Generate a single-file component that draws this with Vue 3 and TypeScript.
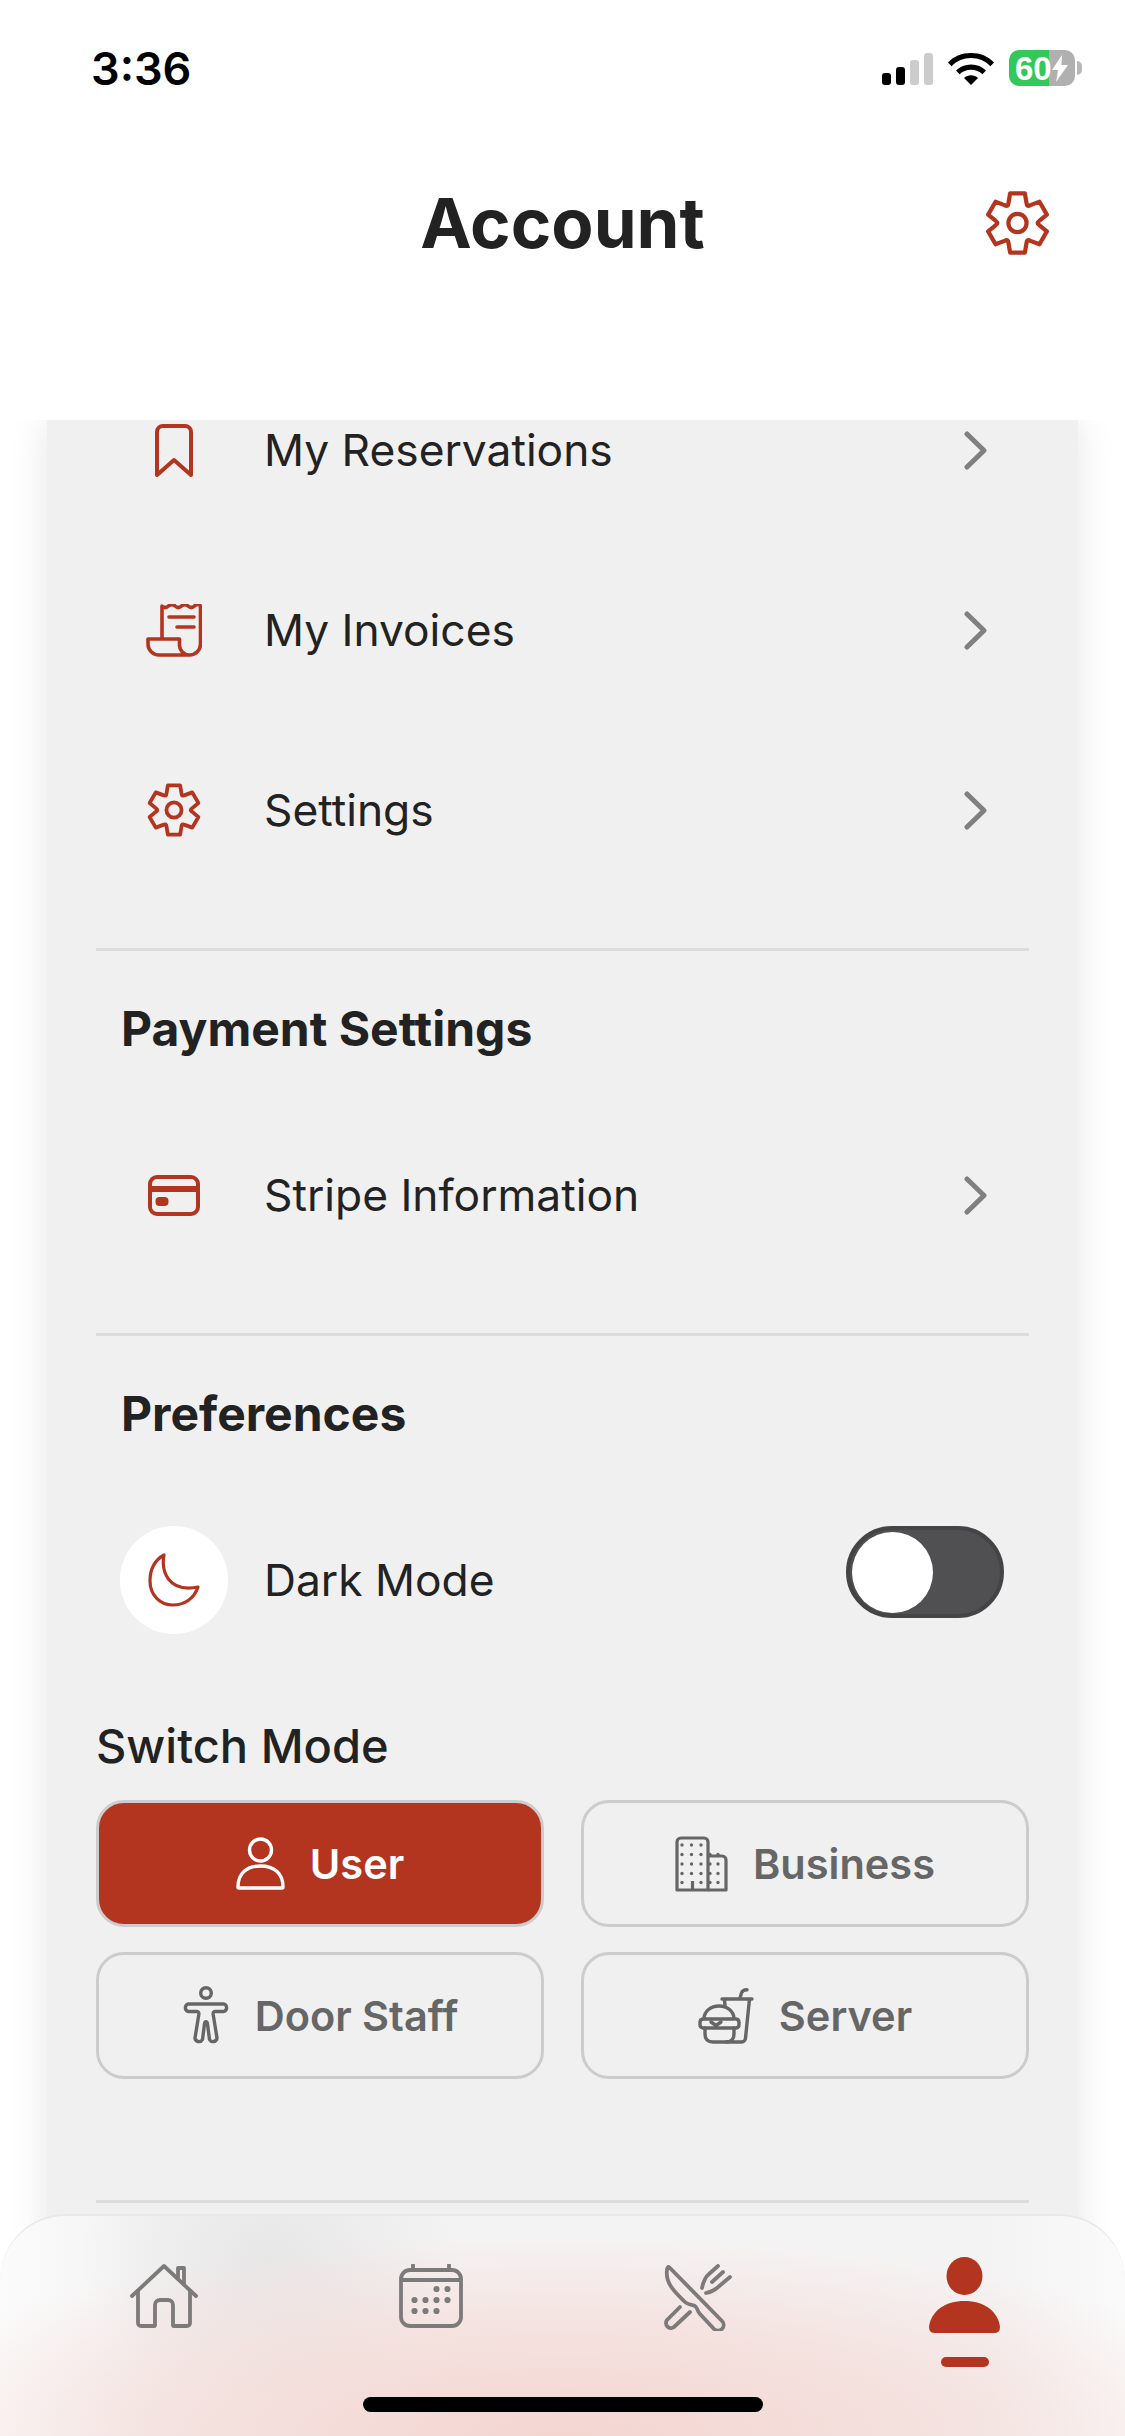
<script setup lang="ts">
interface Row { label: string; icon: string }
const topRows: Row[] = [
  { label: 'My Reservations', icon: 'bookmark' },
  { label: 'My Invoices', icon: 'invoice' },
  { label: 'Settings', icon: 'gear' },
]
function polar(r: number, deg: number): string {
  const a = (deg * Math.PI) / 180
  return `${(50 + r * Math.cos(a)).toFixed(2)} ${(50 + r * Math.sin(a)).toFixed(2)}`
}
function buildGear(): string {
  const outer = 47
  const base = 34
  const valley = 28
  let d = ''
  for (let k = 0; k < 6; k++) {
    const a = -90 + k * 60
    d += `${k === 0 ? 'M' : 'L'}${polar(base, a - 24)} L${polar(outer, a - 14)} L${polar(outer, a + 14)} L${polar(base, a + 24)} Q${polar(valley, a + 30)} ${polar(base, a + 36)} `
  }
  return d + 'Z'
}
const gearPath = buildGear()
const buildingDots: [number, number][] = []
for (const y of [9, 18.5, 28, 37.5, 46.5]) {
  for (const x of [7, 16.5, 26]) {
    if (!(x === 16.5 && y === 46.5)) buildingDots.push([x, y])
  }
  if (y > 18) { buildingDots.push([35, y], [43, y]) }
}
const calendarDots: [number, number][] = [
  [37, 25], [48, 25],
  [15, 36], [26, 36], [37, 36], [48, 36],
  [15, 47], [26, 47], [37, 47],
]
</script>

<template>
  <div class="screen">
    <header class="top">
      <div class="status">
        <span class="time">3:36</span>
        <div class="status-icons">
          <div class="signal">
            <i class="bar on b1"></i><i class="bar on b2"></i><i class="bar b3"></i><i class="bar b4"></i>
          </div>
          <svg class="wifi" width="46" height="33" viewBox="0 0 46 33">
            <path d="M0 10.5C6 4 14 1 23 1s17 3 23 9.5l-3.6 3.7C37 8.700 30.500 6 23 6S9 8.700 3.600 14.200Z" fill="#000"/>
            <path d="M8 18.500C12 14.500 17 12.500 23 12.500s11 2 15 6l-3.600 3.700C31.500 19.300 27.500 17.700 23 17.700s-8.500 1.600-11.400 4.500Z" fill="#000"/>
            <path d="M16 26C18 24.200 20.300 23.300 23 23.300s5 .9 7 2.700l-7 7Z" fill="#000"/>
          </svg>
          <div class="battery">
            <div class="cell"><span class="pct">60</span>
              <svg class="bolt" width="16" height="27" viewBox="0 0 16 27"><path d="M10 0 0 15h6L4 27 16 10H9.500Z" fill="#fff"/></svg>
            </div>
            <i class="tip"></i>
          </div>
        </div>
      </div>
      <div class="title-bar">
        <h1 class="title">Account</h1>
        <svg class="title-gear" width="65" height="66" viewBox="0 0 100 100" fill="none" stroke="#b3351f" stroke-width="6.500" stroke-linejoin="round">
          <path :d="gearPath"/><circle cx="50" cy="50" r="14"/>
        </svg>
      </div>
    </header>

    <main class="panel">
      <div class="scroller">
        <a v-for="r in topRows" :key="r.label" class="row">
          <span class="row-icon">
            <svg v-if="r.icon === 'bookmark'" width="38" height="53" viewBox="0 0 38 53" fill="none" stroke="#b3351f" stroke-width="4" stroke-linejoin="round">
              <path d="M2 51V8a6 6 0 0 1 6-6h22a6 6 0 0 1 6 6v43L19 36Z"/>
            </svg>
            <svg v-else-if="r.icon === 'invoice'" width="56" height="53" viewBox="0 0 56 53" fill="none" stroke="#b3351f" stroke-width="3.600" stroke-linecap="round" stroke-linejoin="round">
              <path d="M16 35V2q3.300 3 6.500 0t6.500 0t6.500 0t6.500 0t6.500 0t6 0V40a11 11 0 0 1-11 11a10 10 0 0 1-10-11v-5H2v5a11 11 0 0 0 11 11h31"/>
              <path d="M23 13h25M31 23h17"/>
            </svg>
            <svg v-else width="54" height="54" viewBox="0 0 100 100" fill="none" stroke="#b3351f" stroke-width="7" stroke-linejoin="round">
              <path :d="gearPath"/><circle cx="50" cy="50" r="14"/>
            </svg>
          </span>
          <span class="row-label">{{ r.label }}</span>
          <svg class="chev" width="23" height="39" viewBox="0 0 23 39" fill="none" stroke="#808080" stroke-width="5" stroke-linecap="round" stroke-linejoin="round"><path d="M3 3l17 16.500L3 36"/></svg>
        </a>

        <hr class="rule rule-a" />
        <h2 class="heading">Payment Settings</h2>
        <a class="row">
          <span class="row-icon">
            <svg width="52" height="41" viewBox="0 0 52 41" fill="none" stroke="#b3351f" stroke-width="4">
              <rect x="2" y="2" width="48" height="37" rx="7"/>
              <path d="M2 14h48" stroke-width="6"/>
              <rect x="7.500" y="22" width="13" height="9" rx="4" fill="#b3351f" stroke="none"/>
            </svg>
          </span>
          <span class="row-label">Stripe Information</span>
          <svg class="chev" width="23" height="39" viewBox="0 0 23 39" fill="none" stroke="#808080" stroke-width="5" stroke-linecap="round" stroke-linejoin="round"><path d="M3 3l17 16.500L3 36"/></svg>
        </a>

        <hr class="rule rule-b" />
        <h2 class="heading">Preferences</h2>
        <div class="dark-row">
          <span class="moon-disc">
            <svg width="52" height="54" viewBox="0 0 52 54" fill="none" stroke="#b3351f" stroke-width="3.200" stroke-linejoin="round">
              <path d="M16 2C13 18 20 40 50 34C46 46 36 52 25 52C11 52 2 41 2 28C2 16 7 7 16 2Z"/>
            </svg>
          </span>
          <span class="row-label dark-label">Dark Mode</span>
          <span class="toggle"><i class="thumb"></i></span>
        </div>

        <h3 class="switch-title">Switch Mode</h3>
        <div class="modes">
          <button class="mode">
            <svg class="mode-icon" width="49" height="53" viewBox="0 0 49 53" fill="none" stroke="#fff" stroke-width="3.400" stroke-linejoin="round">
              <circle cx="24.500" cy="13" r="11"/>
              <path d="M2 50c0-14 9-21 22.500-21S47 36 47 50a1 1 0 0 1-1 1H3a1 1 0 0 1-1-1Z"/>
            </svg>
            <span>User</span>
          </button>
          <button class="mode">
            <svg width="53" height="56" viewBox="0 0 53 56" fill="none" stroke="#666" stroke-width="3.200" stroke-linejoin="round">
              <path d="M2 54V6a4 4 0 0 1 4-4h23a4 4 0 0 1 4 4v48Z"/>
              <path d="M33 20h14a4 4 0 0 1 4 4v30H33"/>
              <path d="M17.500 54V45"/>
              <circle v-for="d in buildingDots" :key="d.join()" :cx="d[0]" :cy="d[1]" r="1.700" fill="#666" stroke="none"/>
            </svg>
            <span>Business</span>
          </button>
          <button class="mode">
            <svg width="48" height="59" viewBox="0 0 48 59" fill="none" stroke="#666" stroke-width="3.400" stroke-linejoin="round">
              <circle cx="24" cy="7" r="5.300"/>
              <path d="M6 18h36a4 4 0 0 1 0 7.500H33c-1.500 0-2 1-1.800 3L35 52a4 4 0 0 1-7.500 1.500L25.500 38c-.4-3-2.600-3-3 0L20.500 53.500A4 4 0 0 1 13 52l3.800-23.500c.2-2-.3-3-1.800-3H6A4 4 0 0 1 6 18Z"/>
            </svg>
            <span>Door Staff</span>
          </button>
          <button class="mode">
            <svg width="56" height="56" viewBox="0 0 56 56" fill="none" stroke="#666" stroke-width="3.400" stroke-linecap="round" stroke-linejoin="round">
              <path d="M42 10 43.500 5Q44.500 2 49 1.800"/>
              <path d="M24 11H54M27 17l-.6-6M51.500 11 47.500 50a4 4 0 0 1-4 4H28"/>
              <path d="M6 31C6 23 13 18 21 18s15 5 15 13Z"/>
              <path d="M5 31a3.500 3.500 0 0 0-3 3.500v2A3.500 3.500 0 0 0 5 40H38a3.500 3.500 0 0 0 3-3.500v-2A3.500 3.500 0 0 0 38 31"/>
              <path d="M13 34l5 3.500L23 34"/>
              <path d="M7 40v6q0 8 8 8h13q8 0 8-8v-6"/>
            </svg>
            <span>Server</span>
          </button>
        </div>
        <hr class="rule rule-c" />
      </div>
    </main>

    <nav class="tabs">
      <a class="tab">
        <svg width="68" height="64" viewBox="0 0 68 64" fill="none" stroke="#7c7a7a" stroke-width="3.800" stroke-linecap="round" stroke-linejoin="round">
          <path d="M2 32 34 2l32 30"/>
          <path d="M8 27V59a3 3 0 0 0 3 3h13a1 1 0 0 0 1-1V41a5 5 0 0 1 5-5h8a5 5 0 0 1 5 5v20a1 1 0 0 0 1 1h13a3 3 0 0 0 3-3V27"/>
          <path d="M48 14.500V4h6v16"/>
        </svg>
      </a>
      <a class="tab">
        <svg width="64" height="64" viewBox="0 0 64 64" fill="none" stroke="#7c7a7a" stroke-width="3.800">
          <rect x="2" y="6" width="60" height="56" rx="9"/>
          <path d="M2 16h60" stroke-width="3.800"/>
          <path d="M14 1v5M50 1v5" stroke-linecap="round"/>
          <circle v-for="d in calendarDots" :key="d.join()" :cx="d[0] + 0.500" :cy="d[1]" r="3.100" fill="#7c7a7a" stroke="none"/>
        </svg>
      </a>
      <a class="tab">
        <svg width="68" height="67" viewBox="0 0 68 67" fill="none" stroke="#7c7a7a" stroke-width="3.800" stroke-linecap="round" stroke-linejoin="round">
          <path d="M5 3 58 57a5.500 5.500 0 0 1-8 8L36 50c-3-3-2-6-5-8-4-2-7-1-10-4C12 29 1 20 3 6Q3.500 2.500 5 3Z"/>
          <path d="M16 43 3 56a5 5 0 0 0 7 7L26 48"/>
          <path d="M54 2 45 10Q40 14 38 24"/>
          <path d="M59 8 48 18M66 13 53 24Q48 28 42 29"/>
        </svg>
      </a>
      <a class="tab tab-active">
        <svg width="71" height="76" viewBox="0 0 71 76" fill="#b3351f">
          <ellipse cx="35.500" cy="19" rx="18" ry="19"/>
          <path d="M0 70C2 54 16 44 35.500 44S69 54 71 70Q71 76 65 76H6Q0 76 0 70Z"/>
        </svg>
        <i class="tab-mark"></i>
      </a>
      <i class="home-bar"></i>
    </nav>
  </div>
</template>

<style>
html, body { margin: 0; background: #fff; }
</style>

<style scoped>
.screen {
  width: 1125px;
  height: 2436px;
  position: relative;
  overflow: hidden;
  display: flex;
  flex-direction: column;
  background: #fff;
  font-family: Inter, "Liberation Sans", sans-serif;
  color: #222;
}
.top {
  height: 420px;
  flex: none;
  background: #fff;
  position: relative;
  z-index: 2;
  display: flex;
  flex-direction: column;
}
.status {
  height: 136px;
  flex: none;
  display: flex;
  justify-content: space-between;
  align-items: center;
  padding: 0 43px 0 91px;
  box-sizing: border-box;
}
.time {
  font-family: Inter, "Liberation Sans", sans-serif;
  font-size: 45px;
  font-weight: 600;
  color: #000;
}
.status-icons { display: flex; align-items: center; gap: 15px; }
.signal { display: flex; align-items: flex-end; gap: 5px; height: 33px; }
.bar { display: block; width: 9px; border-radius: 3px; background: #ccc; }
.bar.on { background: #000; }
.b1 { height: 12px; }
.b2 { height: 18px; }
.b3 { height: 25px; }
.b4 { height: 32px; }
.battery { display: flex; align-items: center; gap: 2px; }
.cell {
  width: 66px;
  height: 36px;
  border-radius: 10px;
  background: linear-gradient(90deg, #34c759 0 40px, #b0b0b0 40px);
  display: flex;
  align-items: center;
  box-sizing: border-box;
  padding-left: 6px;
  color: #fff;
}
.pct {
  font-family: "Liberation Sans", Arial, sans-serif;
  font-size: 33px;
  font-weight: 700;
  line-height: 1;
}
.bolt { flex: none; }
.tip { display: block; width: 5px; height: 14px; background: #b8b8b8; border-radius: 0 5px 5px 0; }
.title-bar {
  display: flex;
  justify-content: center;
  align-items: center;
  position: relative;
  height: 174px;
  flex: none;
}
.title {
  margin: 0;
  font-size: 69px;
  font-weight: 700;
  line-height: 1;
  color: #222;
}
.title-gear { position: absolute; left: 985px; top: 54px; }
.panel {
  flex: 1;
  min-height: 0;
  margin: 0 47px;
  background: #f0f0f0;
  box-shadow: 0 0 36px rgba(0, 0, 0, 0.1);
  overflow: hidden;
}
.scroller {
  margin-top: -60px;
  padding: 0 49px;
  display: flex;
  flex-direction: column;
}
.row {
  height: 180px;
  flex: none;
  display: flex;
  align-items: center;
}
.row-icon {
  width: 168px;
  padding-right: 12px;
  box-sizing: border-box;
  flex: none;
  display: flex;
  justify-content: center;
}
.row-label { font-size: 44.300px; font-weight: 400; color: #222; }
.chev { margin-left: auto; margin-right: 42px; flex: none; }
.rule {
  width: 100%;
  height: 3px;
  margin: 0;
  border: 0;
  background: #dcdcdc;
  flex: none;
}
.rule-a { margin-top: 48px; }
.rule-b { margin-top: 48px; }
.rule-c { margin-top: 121px; }
.heading {
  margin: 50px 0 0 25px;
  font-size: 48px;
  font-weight: 700;
  line-height: 56px;
  height: 104px;
  color: #222;
}
.dark-row {
  display: flex;
  align-items: flex-start;
  margin-top: 36px;
  padding-left: 24px;
  height: 108px;
}
.moon-disc {
  width: 108px;
  height: 108px;
  border-radius: 50%;
  background: #fff;
  flex: none;
  display: flex;
  align-items: center;
  justify-content: center;
}
.dark-label { margin-left: 36px; line-height: 108px; }
.toggle {
  margin-left: auto;
  margin-right: 25px;
  width: 158px;
  height: 92px;
  border-radius: 46px;
  background: #505052;
  border: 4px solid #444446;
  box-sizing: border-box;
  display: flex;
  align-items: center;
  padding-left: 2px;
}
.thumb { display: block; width: 81px; height: 81px; border-radius: 50%; background: #fff; }
.switch-title {
  margin: 84px 0 0;
  font-size: 47px;
  font-weight: 500;
  line-height: 56px;
  color: #222;
}
.modes {
  display: grid;
  grid-template-columns: 448px 448px;
  justify-content: space-between;
  row-gap: 25px;
  margin-top: 26px;
}
.mode {
  height: 127px;
  border: 3px solid #ccc;
  border-radius: 28px;
  background: transparent;
  display: flex;
  align-items: center;
  justify-content: center;
  gap: 25px;
  padding: 0;
  font-family: inherit;
  font-size: 41.500px;
  font-weight: 600;
  color: #666;
}
.mode:first-child { background: #b3351f; color: #fff; }
.tabs {
  position: absolute;
  left: 0;
  right: 0;
  bottom: 0;
  height: 222px;
  box-sizing: border-box;
  z-index: 3;
  border-radius: 66px 66px 0 0;
  border-top: 2px solid #e8e8e8;
  padding: 40px 27px 0 30px;
  display: grid;
  grid-template-columns: repeat(4, 1fr);
  align-items: start;
  background:
    radial-gradient(ellipse 720px 200px at 50% 100%, #f4d5d0 0%, rgba(244, 213, 208, 0.55) 55%, rgba(244, 213, 208, 0) 100%),
    radial-gradient(ellipse 190px 150px at 270px 40px, rgba(228, 228, 228, 0.8), rgba(228, 228, 228, 0)),
    linear-gradient(90deg, #fbfbfb 0, #f4f3f3 14%, #f4f3f3 88%, #fafafa 100%);
}
.tab {
  display: flex;
  flex-direction: column;
  align-items: center;
  padding-top: 8px;
}
.tab svg { flex: none; }
.tab-active { padding-top: 0; margin-top: 1px; }
.tab-mark {
  display: block;
  width: 48px;
  height: 10px;
  border-radius: 5px;
  background: #b3351f;
  margin-top: 24px;
  flex: none;
}
.home-bar {
  position: absolute;
  left: 363px;
  top: 181px;
  width: 400px;
  height: 15px;
  border-radius: 8px;
  background: #000;
}
</style>
